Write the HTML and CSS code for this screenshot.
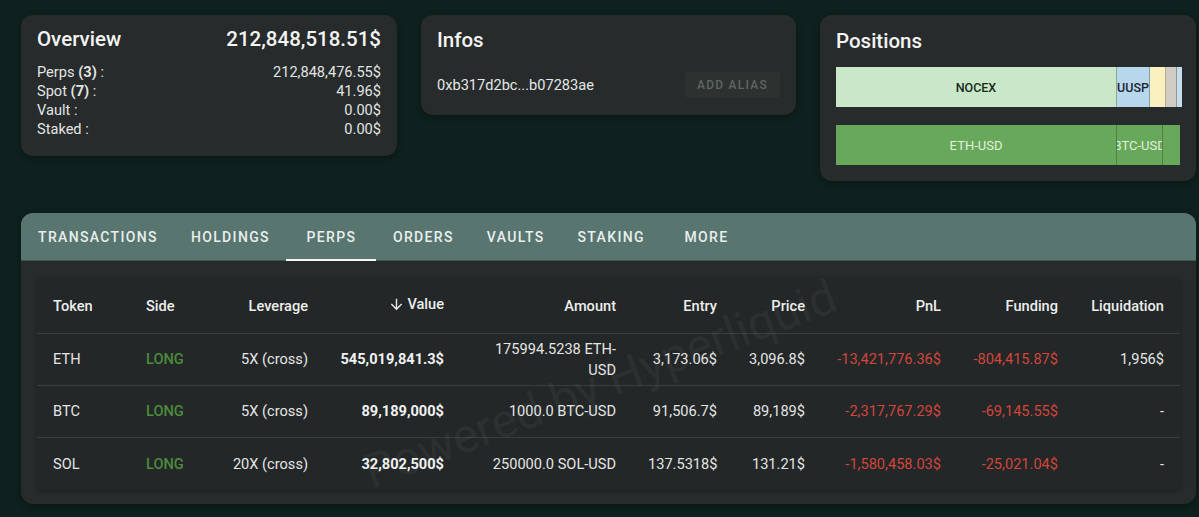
FILE: index.html
```html
<!DOCTYPE html>
<html lang="en">
<head>
<meta charset="utf-8">
<title>Perps</title>
<link rel="stylesheet" href="styles.css">
</head>
<body>
<div class="page">
  <div class="cards">
    <section class="card overview">
      <div class="ov-head"><span>Overview</span><span>212,848,518.51$</span></div>
      <div class="ov-rows">
        <div class="ov-row"><span>Perps <b>(3)</b> :</span><span>212,848,476.55$</span></div>
        <div class="ov-row"><span>Spot <b>(7)</b> :</span><span>41.96$</span></div>
        <div class="ov-row"><span>Vault :</span><span>0.00$</span></div>
        <div class="ov-row"><span>Staked :</span><span>0.00$</span></div>
      </div>
    </section>
    <section class="card infos">
      <div class="card-title">Infos</div>
      <div class="info-row">
        <span class="addr">0xb317d2bc...b07283ae</span>
        <button class="alias-btn">ADD ALIAS</button>
      </div>
    </section>
    <section class="card positions">
      <div class="card-title pos-title">Positions</div>
      <div class="bar bar-spot">
        <div class="seg seg-nocex" style="width:81.2%">NOCEX</div>
        <div class="seg seg-uusp" style="width:9.6%">UUSP</div>
        <div class="seg seg-yellow" style="width:4.6%"></div>
        <div class="seg seg-gray" style="width:3.2%"></div>
        <div class="seg seg-blue" style="width:1.4%"></div>
      </div>
      <div class="bar bar-perp">
        <div class="seg seg-green" style="width:81.7%">ETH-USD</div>
        <div class="seg seg-green" style="width:13.4%">BTC-USD</div>
        <div class="seg seg-green" style="width:4.9%"></div>
      </div>
    </section>
  </div>

  <section class="panel">
    <nav class="tabs">
      <div class="tab">TRANSACTIONS</div>
      <div class="tab">HOLDINGS</div>
      <div class="tab active">PERPS</div>
      <div class="tab">ORDERS</div>
      <div class="tab">VAULTS</div>
      <div class="tab">STAKING</div>
      <div class="tab">MORE</div>
    </nav>
    <div class="panel-body">
      <div class="table-wrap">
        <div class="watermark">Powered by Hyperliquid</div>
        <table class="perps">
          <colgroup>
            <col class="c-token"><col class="c-side"><col class="c-lev"><col class="c-value"><col class="c-amount">
            <col class="c-entry"><col class="c-price"><col class="c-pnl"><col class="c-funding"><col class="c-liq">
          </colgroup>
          <thead>
            <tr>
              <th class="l">Token</th>
              <th class="l">Side</th>
              <th>Leverage</th>
              <th><span class="sort"><svg class="arrow" viewBox="0 0 24 24" width="17" height="17"><path d="M20 12l-1.41-1.41L13 16.17V4h-2v12.17l-5.58-5.59L4 12l8 8 8-8z" fill="currentColor"/></svg>Value</span></th>
              <th>Amount</th>
              <th>Entry</th>
              <th>Price</th>
              <th>PnL</th>
              <th>Funding</th>
              <th>Liquidation</th>
            </tr>
          </thead>
          <tbody>
            <tr>
              <td class="l">ETH</td>
              <td class="l long">LONG</td>
              <td>5X (cross)</td>
              <td class="b">545,019,841.3$</td>
              <td>175994.5238 ETH-USD</td>
              <td>3,173.06$</td>
              <td>3,096.8$</td>
              <td class="neg">-13,421,776.36$</td>
              <td class="neg">-804,415.87$</td>
              <td>1,956$</td>
            </tr>
            <tr>
              <td class="l">BTC</td>
              <td class="l long">LONG</td>
              <td>5X (cross)</td>
              <td class="b">89,189,000$</td>
              <td>1000.0 BTC-USD</td>
              <td>91,506.7$</td>
              <td>89,189$</td>
              <td class="neg">-2,317,767.29$</td>
              <td class="neg">-69,145.55$</td>
              <td>-</td>
            </tr>
            <tr class="last">
              <td class="l">SOL</td>
              <td class="l long">LONG</td>
              <td>20X (cross)</td>
              <td class="b">32,802,500$</td>
              <td>250000.0 SOL-USD</td>
              <td>137.5318$</td>
              <td>131.21$</td>
              <td class="neg">-1,580,458.03$</td>
              <td class="neg">-25,021.04$</td>
              <td>-</td>
            </tr>
          </tbody>
        </table>
      </div>
    </div>
  </section>
</div>
</body>
</html>
```

FILE: styles.css
```css
* { box-sizing: border-box; }

html, body {
  margin: 0;
  padding: 0;
  background: #0e211e;
  font-family: Roboto, "Liberation Sans", Arial, sans-serif;
  color: #e6e8e7;
  width: 1199px;
  height: 517px;
  overflow: hidden;
}

.page {
  width: 1175px;
  margin-left: 21px;
  padding-top: 15px;
}

.cards {
  display: grid;
  grid-template-columns: 376px 375px 376px;
  column-gap: 24px;
  align-items: start;
}

.card {
  background: #272b2b;
  border-radius: 12px;
  box-shadow: 0 2px 6px rgba(0, 0, 0, 0.35);
}

.overview {
  padding: 12px 16px 17px 16px;
}

.ov-head {
  display: flex;
  justify-content: space-between;
  font-size: 20.5px;
  font-weight: 500;
  line-height: 24px;
  color: #f3f4f4;
}

.ov-rows {
  margin-top: 12px;
}

.ov-row {
  display: flex;
  justify-content: space-between;
  font-size: 14.6px;
  line-height: 19px;
  color: #e2e4e3;
}

.ov-row b { font-weight: 700; }

.card-title {
  font-size: 20.5px;
  font-weight: 500;
  line-height: 26px;
  color: #f3f4f4;
}

.infos {
  padding: 12px 16px 17px 16px;
}

.info-row {
  margin-top: 19px;
  display: flex;
  justify-content: space-between;
  align-items: center;
}

.addr {
  font-size: 14.6px;
  color: #e4e6e5;
}

.alias-btn {
  width: 95px;
  height: 26px;
  border: none;
  border-radius: 4px;
  background: #2d3231;
  color: #5e6665;
  font-family: Roboto, "Liberation Sans", Arial, sans-serif;
  font-size: 12px;
  font-weight: 500;
  letter-spacing: 1.25px;
  padding: 0;
}

.positions {
  padding: 12px 14px 16px 16px;
}

.pos-title {
  line-height: 28px;
}

.bar {
  display: flex;
  height: 40px;
  margin-top: 12px;
  overflow: hidden;
}

.bar-perp {
  margin-top: 18px;
  margin-right: 2px;
}

.seg {
  display: flex;
  align-items: center;
  justify-content: center;
  font-size: 12.5px;
  font-weight: 500;
  white-space: nowrap;
  overflow: hidden;
  flex: none;
  border-right: 1px solid rgba(40, 50, 40, 0.35);
}

.seg:last-child { border-right: none; }

.seg-nocex { background: #c8e8c9; color: #1b2a1c; }
.seg-uusp { background: #b6d7ec; color: #1b2430; }
.seg-yellow { background: #fbf0c0; }
.seg-gray { background: #d0ccc4; }
.seg-blue { background: #c6dcef; }
.seg-green { background: #67a85b; color: #e0f0dc; font-weight: 400; font-size: 13px; }

.panel {
  margin-top: 32px;
  background: #272b2b;
  border-radius: 12px;
  overflow: hidden;
  box-shadow: 0 2px 6px rgba(0, 0, 0, 0.35);
}

.tabs {
  display: flex;
  height: 48px;
  background: #587570;
  padding-left: 0.5px;
  border-bottom: 1px solid #3f5552;
}

.tab {
  min-width: 90px;
  padding: 0 16.5px;
  display: flex;
  align-items: center;
  justify-content: center;
  font-size: 14px;
  font-weight: 500;
  letter-spacing: 1.35px;
  color: #e9efed;
  position: relative;
}

.tab.active::after {
  content: "";
  position: absolute;
  left: 0;
  right: 0;
  bottom: -1px;
  height: 2px;
  background: #f4f6f5;
}

.panel-body {
  padding: 17px 16px 14px 16px;
}

.table-wrap {
  position: relative;
  background: #232727;
  border-radius: 4px;
  box-shadow: 0 1px 4px rgba(0, 0, 0, 0.3);
  overflow: hidden;
}

.watermark {
  position: absolute;
  left: 563px;
  top: 106px;
  transform: translate(-50%, -50%) rotate(-21deg);
  font-size: 48px;
  font-weight: 400;
  color: rgba(255, 255, 255, 0.045);
  white-space: nowrap;
  pointer-events: none;
}

.perps {
  width: 100%;
  table-layout: fixed;
  border-collapse: separate;
  border-spacing: 0;
  font-size: 14.6px;
}

.c-token { width: 93px; }
.c-side { width: 84px; }
.c-lev { width: 110px; }
.c-value { width: 136px; }
.c-amount { width: 172px; }
.c-entry { width: 101px; }
.c-price { width: 88px; }
.c-pnl { width: 136px; }
.c-funding { width: 117px; }
.c-liq { width: 106px; }

.perps th, .perps td {
  padding: 0 16px;
  text-align: right;
  vertical-align: middle;
  border-bottom: 1px solid #3a3f3e;
  line-height: 21px;
}

.perps th {
  height: 56px;
  padding-top: 2px;
  font-weight: 500;
  color: #eceeed;
}

.perps td {
  height: 52px;
  color: #e3e5e4;
}

.perps tr.last td { border-bottom: none; }

.perps .l { text-align: left; }

.sort {
  display: inline-flex;
  align-items: center;
  gap: 2px;
}

.arrow { display: block; color: #e6e8e7; }

.perps td.b { font-weight: 700; color: #f0f1f1; }
.perps td.long { color: #4d8b3d; font-weight: 500; }
.perps td.neg { color: #d2453b; }
```
